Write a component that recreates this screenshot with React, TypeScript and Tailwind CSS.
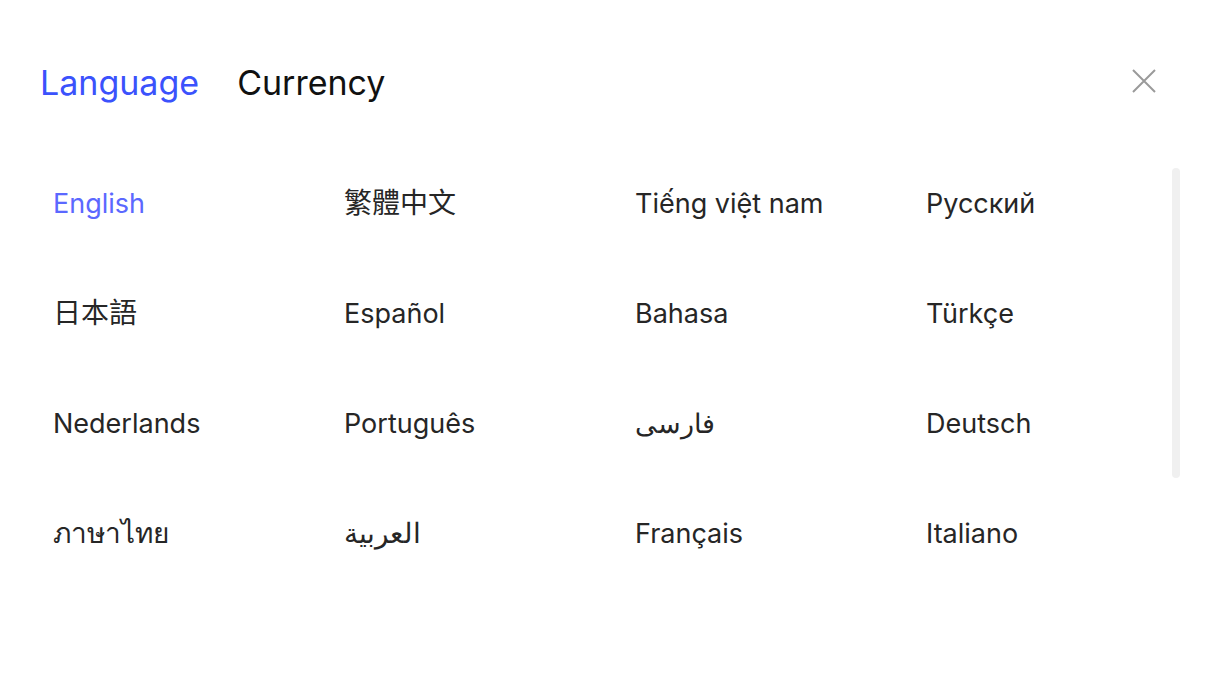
import React, { useState } from 'react';

// cjk / script entries render a touch larger than the latin ones
const LANGUAGES: { label: string; wide?: boolean }[] = [
  { label: 'English' },
  { label: '繁體中文', wide: true },
  { label: 'Tiếng việt nam' },
  { label: 'Русский' },
  { label: '日本語', wide: true },
  { label: 'Español' },
  { label: 'Bahasa' },
  { label: 'Türkçe' },
  { label: 'Nederlands' },
  { label: 'Português' },
  { label: 'فارسی' },
  { label: 'Deutsch' },
  { label: 'ภาษาไทย', wide: true },
  { label: 'العربية', wide: true },
  { label: 'Français' },
  { label: 'Italiano' },
];

export default function App() {
  const [tab, setTab] = useState<'language' | 'currency'>('language');
  const [selected, setSelected] = useState<string>('English');

  return (
    <div
      className="w-full h-[686px] bg-white overflow-hidden"
      style={{ fontFamily: 'Inter, "Noto Sans", "Noto Sans CJK TC", sans-serif' }}
    >
      {/* Header: tabs + close */}
      <div className="flex items-center justify-between pl-10 pr-[50px] pt-[62px]">
        <div className="flex items-center gap-[38px]">
          <button
            onClick={() => setTab('language')}
            className={`text-[34px] leading-[42px] ${tab === 'language' ? 'text-[#3b52fc]' : 'text-[#111]'}`}
          >
            Language
          </button>
          <button
            onClick={() => setTab('currency')}
            className={`text-[34px] leading-[42px] ${tab === 'currency' ? 'text-[#3b52fc]' : 'text-[#111]'}`}
          >
            Currency
          </button>
        </div>
        <button className="w-6 h-6 -mt-1 text-[#9a9a9a]">
          <svg viewBox="0 0 24 24" width="24" height="24" fill="none" stroke="currentColor" strokeWidth="2">
            <path d="M1 1L23 23M23 1L1 23" />
          </svg>
        </button>
      </div>

      {/* Language grid + scrollbar */}
      <div className="flex pl-[53px] pr-[26px] mt-[44px]">
        <div className="flex-1 grid grid-cols-[291px_291px_291px_1fr] auto-rows-[110px]">
          {LANGUAGES.map((lang) => (
            <button
              key={lang.label}
              onClick={() => setSelected(lang.label)}
              className={`text-left leading-none flex items-center ${lang.wide ? 'text-[28px]' : 'text-[27px]'} ${
                selected === lang.label ? 'text-[#5b68ff]' : 'text-[#262626]'
              }`}
            >
              <span dir="auto">{lang.label}</span>
            </button>
          ))}
        </div>
        <div className="w-2 h-[310px] mt-[20px] rounded-full bg-[#f0f0f0]" />
      </div>
    </div>
  );
}
